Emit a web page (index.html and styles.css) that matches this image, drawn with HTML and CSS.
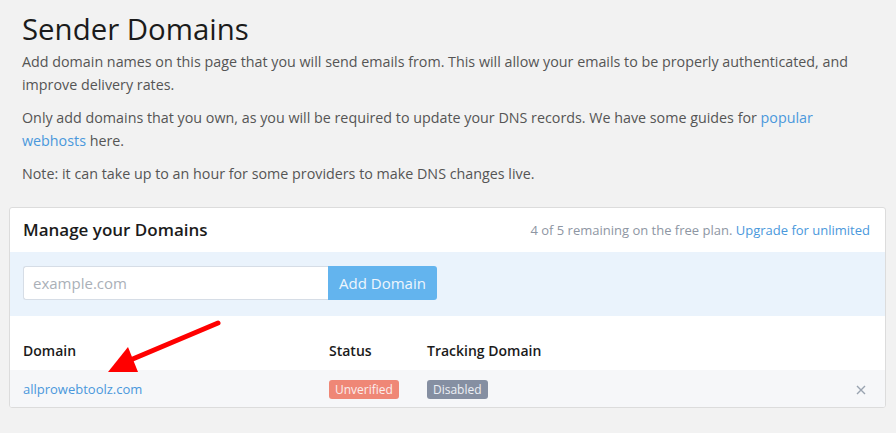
FILE: index.html
```html
<!DOCTYPE html>
<html lang="en">
<head>
    <meta charset="UTF-8">
    <meta name="viewport" content="width=device-width, initial-scale=1.0">
    <title>Sender Domains</title>
    <link rel="stylesheet" href="styles.css">
</head>
<body>
    <div class="page">
        <div class="intro">
            <h1>Sender Domains</h1>
            <p>Add domain names on this page that you will send emails from. This will allow your emails to be properly authenticated, and improve delivery rates.</p>
            <p>Only add domains that you own, as you will be required to update your DNS records. We have some guides for <a href="#">popular webhosts</a> here.</p>
            <p>Note: it can take up to an hour for some providers to make DNS changes live.</p>
        </div>

        <div class="card">
            <div class="card-header">
                <h2>Manage your Domains</h2>
                <span class="quota">4 of 5 remaining on the free plan. <a href="#">Upgrade for unlimited</a></span>
            </div>

            <form class="add-form" onsubmit="return false">
                <input type="text" class="domain-input" placeholder="example.com">
                <button type="submit" class="add-btn">Add Domain</button>
            </form>

            <table class="domains">
                <colgroup>
                    <col class="col-domain">
                    <col class="col-status">
                    <col class="col-tracking">
                    <col>
                </colgroup>
                <thead>
                    <tr>
                        <th>Domain</th>
                        <th>Status</th>
                        <th>Tracking Domain</th>
                        <th></th>
                    </tr>
                </thead>
                <tbody>
                    <tr>
                        <td><a href="#">allprowebtoolz.com</a></td>
                        <td><span class="badge badge-unverified">Unverified</span></td>
                        <td><span class="badge badge-disabled">Disabled</span></td>
                        <td class="remove">
                            <svg width="10" height="10" viewBox="0 0 10 10"><path d="M1 1L9 9M9 1L1 9" stroke="#9aa3b0" stroke-width="1.4" fill="none"/></svg>
                        </td>
                    </tr>
                </tbody>
            </table>
        </div>
    </div>

    <!-- annotation arrow drawn over the screenshot -->
    <svg class="arrow" width="896" height="433" viewBox="0 0 896 433">
        <line x1="218" y1="323" x2="128" y2="361" stroke="#ff0000" stroke-width="5" stroke-linecap="round"/>
        <polygon points="108,372 128,347 138,372" fill="#ff0000"/>
    </svg>
</body>
</html>
```

FILE: styles.css
```css
body {
    margin: 0;
    background-color: #f2f2f2;
    font-family: "Open Sans", "Liberation Sans", sans-serif;
    color: #555;
}
a {
    color: #4a98dc;
    text-decoration: none;
}
.page {
    padding: 0 10px 0 9px;
}
.intro {
    padding: 0 13px;
}
h1 {
    font-size: 29.4px;
    font-weight: 400;
    line-height: 33px;
    color: #1b1b1b;
    margin: 13px 0 5px;
}
.intro p {
    font-size: 14.3px;
    line-height: 22.5px;
    margin: 0 0 11px;
}
.card {
    margin-top: 21px;
    background-color: white;
    border: 1px solid #dcdcdc;
    border-radius: 3px;
    overflow: hidden;
}
.card-header {
    display: flex;
    align-items: center;
    justify-content: space-between;
    height: 44px;
    padding: 0 15px 0 13px;
}
.card-header h2 {
    margin: 0;
    font-size: 17px;
    font-weight: 600;
    color: #1b1b1b;
}
.quota {
    font-size: 13px;
    color: #8e96a3;
}
.add-form {
    display: flex;
    background-color: #eaf3fc;
    padding: 14px 13px 16px;
}
.domain-input {
    width: 305px;
    height: 34px;
    box-sizing: border-box;
    border: 1px solid #d6dde6;
    border-right: none;
    border-radius: 3px 0 0 3px;
    padding: 0 9px;
    font-family: inherit;
    font-size: 15px;
    color: #333;
    outline: none;
}
.domain-input::placeholder {
    color: #aab0b8;
}
.add-btn {
    height: 34px;
    width: 109px;
    border: none;
    border-radius: 0 3px 3px 0;
    background-color: #63b4ee;
    color: #eef6fd;
    font-family: inherit;
    font-size: 15px;
    padding: 0;
    cursor: pointer;
}
.domains {
    width: 100%;
    table-layout: fixed;
    border-collapse: collapse;
    margin-top: 16px;
}
.col-domain {
    width: 306px;
}
.col-status {
    width: 98px;
}
.col-tracking {
    width: 300px;
}
.domains th {
    text-align: left;
    font-size: 14px;
    font-weight: 600;
    color: #1b1b1b;
    padding: 8px 13px;
    line-height: 22.5px;
}
.domains tbody tr {
    background-color: #f6f7f9;
}
.domains td {
    height: 37px;
    padding: 0 13px;
    font-size: 13px;
    line-height: 20px;
}
.badge {
    display: inline-block;
    padding: 0 6px;
    line-height: 19px;
    border-radius: 3px;
    font-size: 12px;
    color: #fbeeee;
    vertical-align: middle;
}
.badge-unverified {
    background-color: #ef8776;
}
.badge-disabled {
    background-color: #858fa2;
    color: #edf0f5;
}
.domains td.remove {
    text-align: right;
    padding-right: 19px;
}
.remove svg {
    display: inline-block;
    vertical-align: middle;
}
.arrow {
    position: absolute;
    left: 0;
    top: 0;
    pointer-events: none;
}
```
